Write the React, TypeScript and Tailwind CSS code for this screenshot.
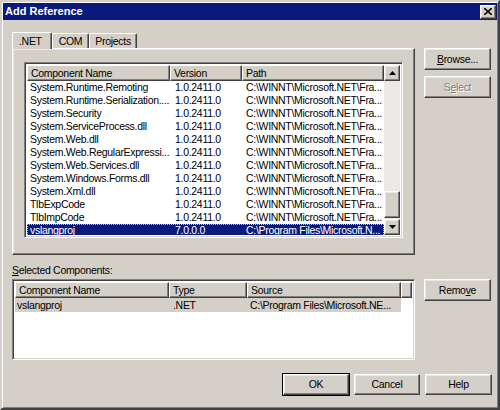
import React from "react";

const raised =
  "border border-t-white border-l-white border-r-[#404040] border-b-[#404040] shadow-[inset_-1px_-1px_0_#808080,inset_1px_1px_0_#e8e6e2]";
const sunken =
  "border border-t-[#808080] border-l-[#808080] border-r-white border-b-white shadow-[inset_1px_1px_0_#404040,inset_-1px_-1px_0_#d4d0c8]";
const headerCell =
  "h-[16px] flex items-center px-[3px] bg-[#d4d0c8] border border-t-white border-l-white border-r-[#404040] border-b-[#404040] shadow-[inset_-1px_-1px_0_#808080] whitespace-nowrap overflow-hidden";

const rows = [
  ["System.Runtime.Remoting", "1.0.2411.0", "C:\\WINNT\\Microsoft.NET\\Fra..."],
  ["System.Runtime.Serialization....", "1.0.2411.0", "C:\\WINNT\\Microsoft.NET\\Fra..."],
  ["System.Security", "1.0.2411.0", "C:\\WINNT\\Microsoft.NET\\Fra..."],
  ["System.ServiceProcess.dll", "1.0.2411.0", "C:\\WINNT\\Microsoft.NET\\Fra..."],
  ["System.Web.dll", "1.0.2411.0", "C:\\WINNT\\Microsoft.NET\\Fra..."],
  ["System.Web.RegularExpressi...", "1.0.2411.0", "C:\\WINNT\\Microsoft.NET\\Fra..."],
  ["System.Web.Services.dll", "1.0.2411.0", "C:\\WINNT\\Microsoft.NET\\Fra..."],
  ["System.Windows.Forms.dll", "1.0.2411.0", "C:\\WINNT\\Microsoft.NET\\Fra..."],
  ["System.Xml.dll", "1.0.2411.0", "C:\\WINNT\\Microsoft.NET\\Fra..."],
  ["TlbExpCode", "1.0.2411.0", "C:\\WINNT\\Microsoft.NET\\Fra..."],
  ["TlbImpCode", "1.0.2411.0", "C:\\WINNT\\Microsoft.NET\\Fra..."],
];

function Button({ children, w = "w-[67px]", h = "h-[22px]", disabled = false, isDefault = false }: { children: React.ReactNode; w?: string; h?: string; disabled?: boolean; isDefault?: boolean }) {
  return (
    <div className={`${w} ${h} ${isDefault ? "outline outline-1 outline-black" : ""} ${raised} bg-[#d4d0c8] flex items-center justify-center`}>
      <span className={disabled ? "text-[#808080] [text-shadow:1px_1px_0_#ffffff]" : "text-black"}>{children}</span>
    </div>
  );
}

function Arrow({ up }: { up: boolean }) {
  return (
    <div className={`h-[16px] w-[16px] ${raised} bg-[#d4d0c8] flex items-center justify-center`}>
      <svg width="7" height="4" viewBox="0 0 7 4">
        {up ? <polygon points="3.5,0 7,4 0,4" fill="#000" /> : <polygon points="0,0 7,0 3.5,4" fill="#000" />}
      </svg>
    </div>
  );
}

export default function App() {
  return (
    <div
      className="w-[500px] h-[410px] bg-[#d4d0c8] text-[10.5px] tracking-[-0.3px] leading-[13px] text-black border-2 border-t-[#d4d0c8] border-l-[#d4d0c8] border-r-[#404040] border-b-[#404040] shadow-[inset_1px_1px_0_#ffffff,inset_-1px_-1px_0_#808080] flex flex-col overflow-hidden"
      style={{ fontFamily: '"Liberation Sans", Arial, sans-serif' }}
    >
      {/* title bar */}
      <div className="mx-[1px] mt-[1px] h-[17px] bg-[#0b1a7a] flex items-center justify-between pl-[2px] pr-[1px]">
        <span className="text-white font-bold text-[11px] tracking-normal">Add Reference</span>
        <div className={`w-[16px] h-[14px] ${raised} bg-[#d4d0c8] flex items-center justify-center`}>
          <svg width="8" height="7" viewBox="0 0 8 7">
            <path d="M0 0 L8 7 M8 0 L0 7" stroke="#000" strokeWidth="1.6" />
          </svg>
        </div>
      </div>

      {/* main row */}
      <div className="flex pl-[10px] pt-[12px] gap-[9px]">
        <div className="w-[403px] flex flex-col">
          {/* tabs */}
          <div className="flex items-end h-[16px] relative z-10">
            <div className="h-[17px] -mb-[1px] pl-[6px] pr-[9px] bg-[#d4d0c8] border border-b-0 border-t-white border-l-white border-r-[#404040] rounded-t-[2px] shadow-[inset_-1px_0_0_#808080] flex items-center">
              .NET
            </div>
            <div className="h-[15px] px-[6px] bg-[#d4d0c8] border border-b-0 border-t-white border-l-white border-r-[#404040] rounded-t-[2px] shadow-[inset_-1px_0_0_#808080] flex items-center">
              COM
            </div>
            <div className="h-[15px] px-[5px] bg-[#d4d0c8] border border-b-0 border-t-white border-l-white border-r-[#404040] rounded-t-[2px] shadow-[inset_-1px_0_0_#808080] flex items-center">
              Projects
            </div>
          </div>
          {/* tab panel */}
          <div className={`h-[207px] ${raised} bg-[#d4d0c8] pt-[13px] pl-[11px] pr-[11px]`}>
            <div className={`h-[176px] ${sunken} bg-white p-[2px] flex`}>
              <div className="flex-1 flex flex-col overflow-hidden">
                <div className="flex">
                  <div className={`${headerCell} w-[143px]`}>Component Name</div>
                  <div className={`${headerCell} w-[72px]`}>Version</div>
                  <div className={`${headerCell} flex-1`}>Path</div>
                </div>
                {rows.map((r) => (
                  <div key={r[0]} className="flex h-[13px]">
                    <div className="w-[143px] pl-[3px] whitespace-nowrap overflow-hidden">{r[0]}</div>
                    <div className="w-[72px] pl-[5px] whitespace-nowrap">{r[1]}</div>
                    <div className="flex-1 pl-[4px] whitespace-nowrap overflow-hidden">{r[2]}</div>
                  </div>
                ))}
                <div className="flex h-[13px] bg-[#0b1a7a] text-white outline outline-1 outline-dotted outline-[#c0c0c0] -outline-offset-1">
                  <div className="w-[143px] pl-[3px] whitespace-nowrap">vslangproj</div>
                  <div className="w-[72px] pl-[5px] whitespace-nowrap">7.0.0.0</div>
                  <div className="flex-1 pl-[4px] whitespace-nowrap overflow-hidden">C:\Program Files\Microsoft.N...</div>
                </div>
              </div>
              {/* scrollbar */}
              <div className="w-[16px] flex flex-col bg-[#ebe9e5]">
                <Arrow up />
                <div className="flex-1 flex flex-col justify-end">
                  <div className={`h-[27px] ${raised} bg-[#d4d0c8]`} />
                  <div className="h-[1px]" />
                </div>
                <Arrow up={false} />
              </div>
            </div>
          </div>
        </div>

        <div className="flex flex-col gap-[6px] pt-[16px]">
          <Button>
            <span className="underline">B</span>rowse...
          </Button>
          <Button disabled>
            S<span className="underline">e</span>lect
          </Button>
        </div>
      </div>

      {/* selected components */}
      <div className="pl-[10px] mt-[9px] h-[13px]">
        <span className="underline">S</span>elected Components:
      </div>
      <div className="flex pl-[10px] mt-[2px] gap-[9px]">
        <div className={`w-[403px] h-[81px] ${sunken} bg-white p-[2px] flex flex-col`}>
          <div className="flex">
            <div className={`${headerCell} w-[154px]`}>Component Name</div>
            <div className={`${headerCell} w-[78px]`}>Type</div>
            <div className={`${headerCell} w-[154px]`}>Source</div>
            <div className={`${headerCell} flex-1`} />
          </div>
          <div className="flex h-[14px] items-center">
            <div className="flex w-[386px] h-[14px] items-center bg-[#d4d0c8]">
              <div className="w-[154px] pl-[2px] whitespace-nowrap">vslangproj</div>
              <div className="w-[78px] pl-[4px]">.NET</div>
              <div className="flex-1 pl-[3px] whitespace-nowrap overflow-hidden">C:\Program Files\Microsoft.NE...</div>
            </div>
          </div>
        </div>
        <div>
          <Button>
            Remo<span className="underline">v</span>e
          </Button>
        </div>
      </div>

      {/* bottom buttons */}
      <div className="flex justify-end gap-[5px] pr-[6px] mt-[14px]">
        <Button w="w-[66px]" h="h-[21px]" isDefault>
          OK
        </Button>
        <Button w="w-[66px]" h="h-[21px]">
          Cancel
        </Button>
        <Button w="w-[67px]" h="h-[21px]">
          Help
        </Button>
      </div>
    </div>
  );
}
